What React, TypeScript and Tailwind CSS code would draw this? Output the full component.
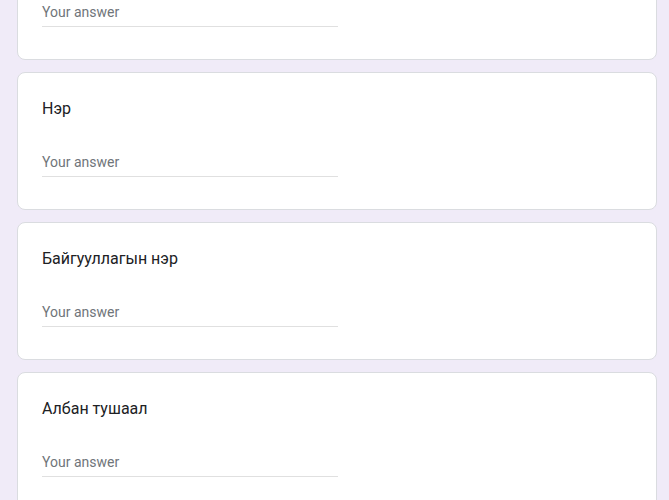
import React from 'react'

const QUESTIONS = ['Имэйл', 'Нэр', 'Байгууллагын нэр', 'Албан тушаал']

function QuestionCard({ title }: { title: string }) {
  return (
    <div className="w-[640px] h-[138px] shrink-0 rounded-lg border border-[#dadce0] bg-white px-6 pt-6 pb-8">
      <div className="h-6 text-base leading-6 text-[#202124]">{title}</div>
      <div className="mt-[31px] w-[296px] border-b border-[#e0e0e0] pb-1 text-sm leading-5 text-[#70757a]">
        Your answer
      </div>
    </div>
  )
}

export default function App() {
  return (
    <div
      className="h-[500px] w-full overflow-hidden bg-[#f0ebf8]"
      style={{ fontFamily: 'Roboto, "Noto Sans", Arial, sans-serif' }}
    >
      <div className="ml-[17px] mt-[-78px] flex flex-col gap-3">
        {QUESTIONS.map((q) => (
          <QuestionCard key={q} title={q} />
        ))}
      </div>
    </div>
  )
}
